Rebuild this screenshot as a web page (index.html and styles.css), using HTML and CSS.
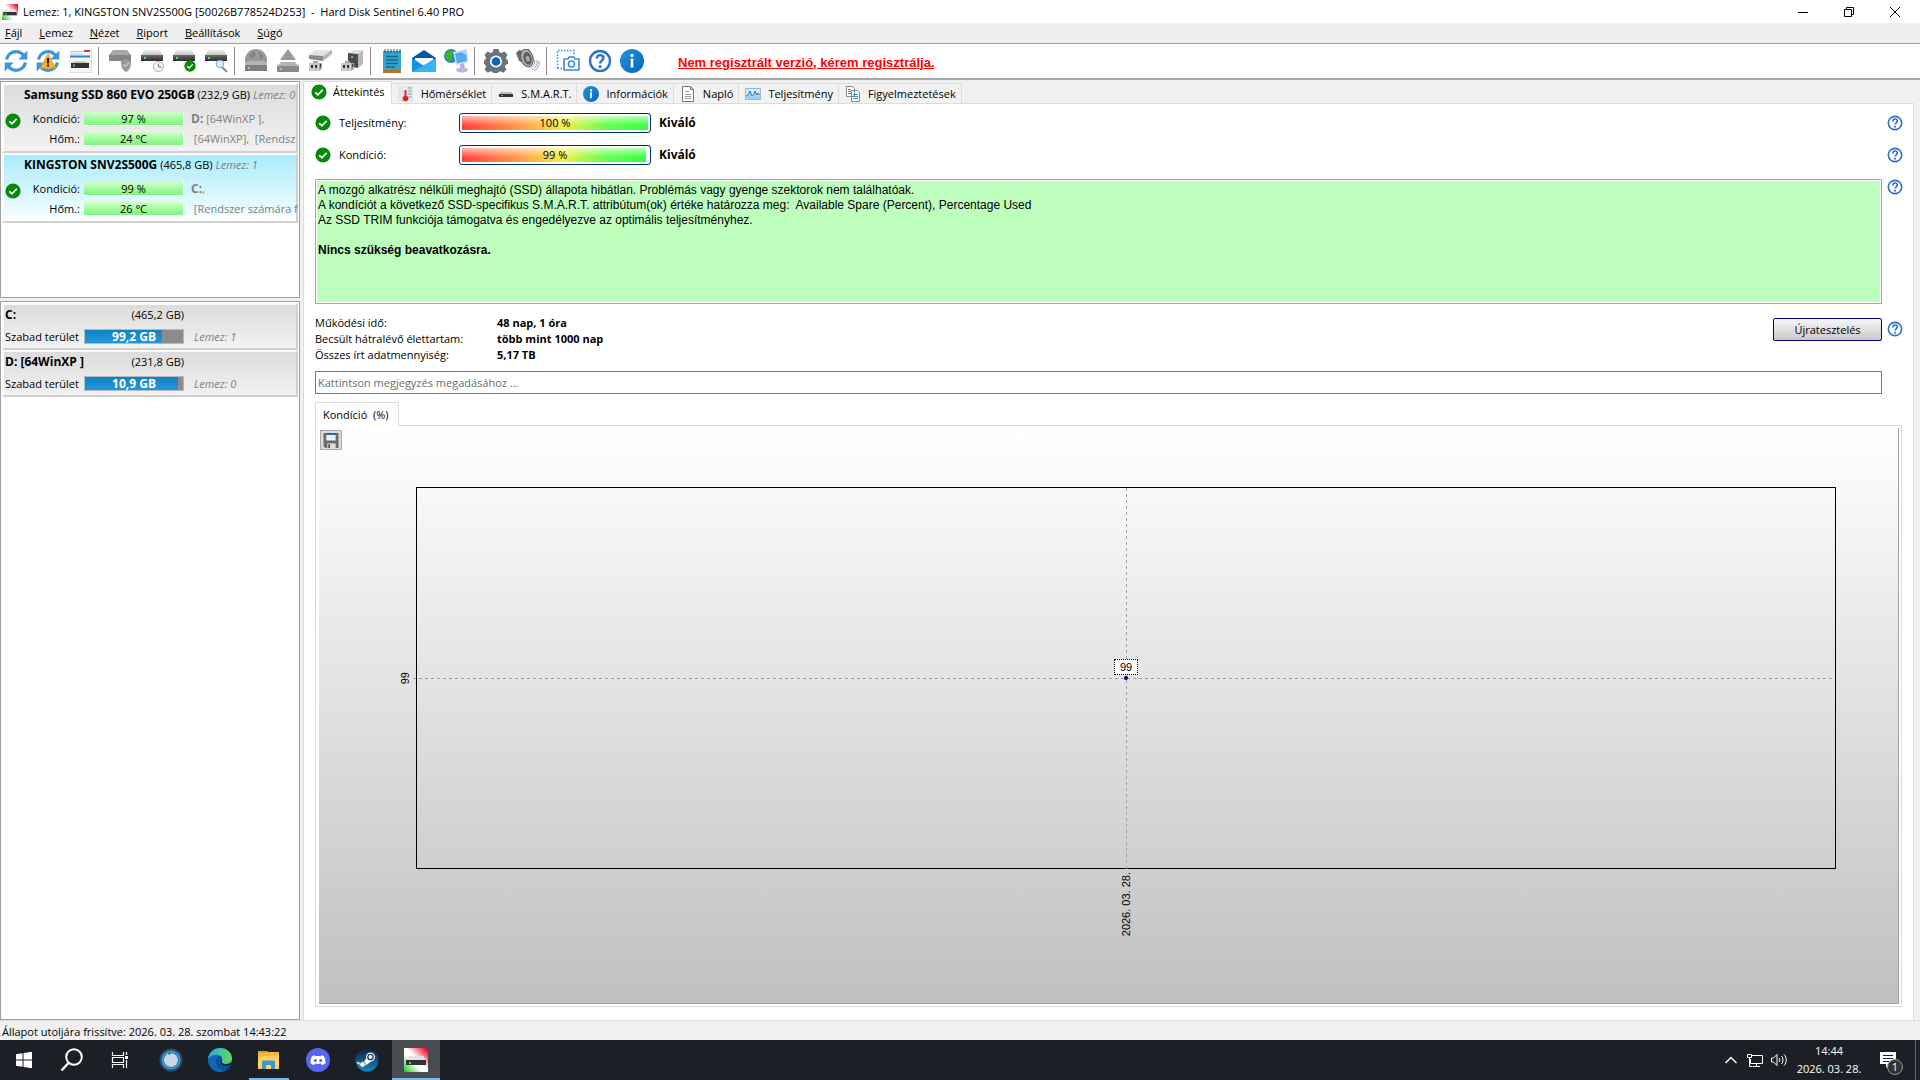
FILE: index.html
```html
<!DOCTYPE html>
<html lang="hu">
<head>
	<meta charset="utf-8">
	<meta name="viewport" content="width=device-width, initial-scale=1">
	<title>Hard Disk Sentinel 6.40 PRO</title>
	<link rel="stylesheet" href="styles.css">
</head>
<body>
	<!-- shared icon shapes -->
	<svg class="defs" aria-hidden="true">
		<defs>
			<linearGradient id="g-metal" x1="0" y1="0" x2="0" y2="1"><stop offset="0" stop-color="#f0f0f0"/><stop offset="1" stop-color="#c2c2c2"/></linearGradient>
			<linearGradient id="g-dark" x1="0" y1="0" x2="0" y2="1"><stop offset="0" stop-color="#6a6a6a"/><stop offset="1" stop-color="#2c2c2c"/></linearGradient>
			<linearGradient id="g-info" x1="0" y1="0" x2="1" y2="1"><stop offset="0" stop-color="#2394df"/><stop offset="1" stop-color="#0a64b8"/></linearGradient>
			<linearGradient id="g-app" x1="1" y1="0" x2="0" y2="1"><stop offset="0.05" stop-color="#f00020"/><stop offset="0.45" stop-color="#fff"/><stop offset="0.6" stop-color="#fff"/><stop offset="1" stop-color="#10c820"/></linearGradient>
			<linearGradient id="g-edge" x1="0" y1="0" x2="1" y2="0"><stop offset="0" stop-color="#2aa6e8"/><stop offset="1" stop-color="#5fdc58"/></linearGradient>
			<linearGradient id="g-steam" x1="0" y1="0" x2="0" y2="1"><stop offset="0" stop-color="#101c44"/><stop offset="1" stop-color="#1488c4"/></linearGradient>
		</defs>
		<symbol id="i-ok" viewBox="0 0 16 16"><circle cx="8" cy="8" r="7.6" fill="#078a07"/><path d="M4.3 8.3l2.6 2.5 4.8-5" fill="none" stroke="#fff" stroke-width="1.8"/></symbol>
		<symbol id="i-help" viewBox="0 0 24 24"><circle cx="12" cy="12" r="10" fill="#f8fbff" stroke="#2f6fc4" stroke-width="2.4"/><path d="M8.8 9.6c0-2.2 1.3-3.5 3.3-3.5s3.3 1.2 3.3 3c0 2.6-3.2 2.6-3.2 5.3" fill="none" stroke="#3070c8" stroke-width="2.4"/><circle cx="12.1" cy="17.5" r="1.5" fill="#3070c8"/></symbol>
		<symbol id="i-info" viewBox="0 0 24 24"><circle cx="12" cy="12" r="12" fill="url(#g-info)"/><path d="M10.7 9.5h2.6v9h-2.6z" fill="#fff"/><circle cx="12" cy="6.4" r="1.7" fill="#fff"/></symbol>
		<symbol id="i-sync" viewBox="0 0 24 24"><path d="M2.5 10.5C3.7 5.600 7.600 2.700 12 2.700c3.100 0 5.700 1.400 7.500 3.700M21.500 13.500c-1.200 4.900-5.100 7.800-9.500 7.800-3.100 0-5.700-1.400-7.500-3.700" fill="none" stroke="#3b94dc" stroke-width="3.200"/><path d="M23.300 1.500v9h-9zM.7 22.500v-9h9z" fill="#3b94dc"/></symbol>
		<symbol id="i-drive" viewBox="0 0 24 24"><path d="M5 2h14l4 5H1z" fill="url(#g-metal)"/><path d="M1 7h22v6H1z" fill="url(#g-dark)"/><path d="M4 9h2v2H4z" fill="#3df03d"/></symbol>
		<symbol id="i-app" viewBox="0 0 24 24"><path d="M0 0h24v24H0z" fill="url(#g-app)"/><path d="M5 8h14l3 4H2z" fill="#e4e4e4"/><path d="M2 12h20v5H2z" fill="#333"/><path d="M5 14h2v2H5z" fill="#2df02d"/></symbol>
		<symbol id="i-plug" viewBox="0 0 24 24"><path d="M1 15h4v-2h5v2h4v6l-3 2H1z" fill="#a5a5a5"/><path d="M1 15h10v8H1z" fill="#c9c9c9"/><path d="M3 17h2v3H3zM7 17h2v3H7zM12 16h1v3h-1z" fill="#333"/></symbol>
	</svg>

	<header class="titlebar">
		<svg class="icon16"><use href="#i-app"/></svg>
		<h1>Lemez: 1, KINGSTON SNV2S500G [50026B778524D253]&nbsp; -&nbsp; Hard Disk Sentinel 6.40 PRO</h1>
		<div class="window-buttons">
			<button type="button" aria-label="Kis méret"><svg viewBox="0 0 12 12"><path d="M1 6.500h10"/></svg></button>
			<button type="button" aria-label="Előző méret"><svg viewBox="0 0 12 12"><path d="M1.500 3.500h7v7h-7zM3.500 3.500v-2h7v7h-2"/></svg></button>
			<button type="button" aria-label="Bezárás"><svg viewBox="0 0 12 12"><path d="M1 1l10 10M11 1L1 11"/></svg></button>
		</div>
	</header>

	<nav class="menubar">
		<a href="#"><u>F</u>ájl</a>
		<a href="#"><u>L</u>emez</a>
		<a href="#"><u>N</u>ézet</a>
		<a href="#"><u>R</u>iport</a>
		<a href="#"><u>B</u>eállítások</a>
		<a href="#"><u>S</u>úgó</a>
	</nav>

	<div class="toolbar">
		<button type="button" aria-label="Frissítés"><svg><use href="#i-sync"/></svg></button>
		<button type="button" aria-label="Újraérzékelés"><svg viewBox="0 0 24 24"><use href="#i-sync"/><path d="M12 5l7.500 14h-15z" fill="#ffb41e" stroke="#f39a10" stroke-linejoin="round"/><path d="M10.900 9h2.200v5.500h-2.200zM10.900 15.500h2.200v2h-2.200z" fill="#222"/></svg></button>
		<button type="button" aria-label="Ablak"><svg viewBox="0 0 24 24"><path d="M1 1h23v23H1z" fill="#ddd"/><path d="M1 1h22v22H1z" fill="#f7f7f7"/><path d="M2 2.500h13M2 5h13" stroke="#b8c8d8"/><path d="M2 7.500h20" stroke="#2f80d8" stroke-width="2"/><path d="M16 2h6" stroke="#d03838" stroke-width="2"/><path d="M6 12h12l3 3H3z" fill="#ccc"/><path d="M3 14h18v5H3z" fill="#333"/><path d="M5 15.500h2v2H5z" fill="#35e035"/></svg></button>
		<span class="sep"></span>
		<button type="button" aria-label="Lemez leállítása"><svg viewBox="0 0 24 24"><path d="M5 1h14l4 5v6H1V6z" fill="#a8a8a8"/><path d="M1 6h22v6H1z" fill="#858585"/><path d="M13 12l5-2 5 2c0 6-1 9-5 11-4-2-5-5-5-11z" fill="#999"/><path d="M15.500 15.500l2 2 3.500-4" stroke="#c6c6c6" fill="none" stroke-width="1.500"/></svg></button>
		<button type="button" aria-label="Rövid teszt"><svg viewBox="0 0 24 24"><use href="#i-drive" y="-1"/><circle cx="18.500" cy="17.500" r="5" fill="#f5f5f5" stroke="#aaa"/><path d="M18.500 14.500v3.500h3" fill="none" stroke="#777"/></svg></button>
		<button type="button" aria-label="Kiterjesztett teszt"><svg viewBox="0 0 24 24"><use href="#i-drive" y="-1"/><use href="#i-ok" x="12" y="11" width="12" height="12"/></svg></button>
		<button type="button" aria-label="Felületteszt"><svg viewBox="0 0 24 24"><use href="#i-drive" y="-1"/><path d="M18 18l5 5" stroke="#888" stroke-width="2"/><circle cx="16" cy="15" r="3.800" fill="#d8eeff" stroke="#7ba5c8"/></svg></button>
		<span class="sep"></span>
		<button type="button" aria-label="Hálózati lemez"><svg viewBox="0 0 24 24"><circle cx="12" cy="11" r="11" fill="#999"/><path d="M5 6l5-4 2 4-4 4zM15 3l5 5-4 3z" fill="#858585"/><path d="M4 12h16l3 4H1z" fill="#b5b5b5"/><path d="M1 16h22v6H1z" fill="#808080"/><path d="M4 18h2v2H4z" fill="#b8b8b8"/></svg></button>
		<button type="button" aria-label="Lemez eltávolítása"><svg viewBox="0 0 24 24"><path d="M12 0l8 11H4z" fill="#999"/><path d="M5 13h14l4 4H1z" fill="#b5b5b5"/><path d="M1 17h22v6H1z" fill="#8a8a8a"/><path d="M4 19h2v2H4z" fill="#b8b8b8"/></svg></button>
		<button type="button" aria-label="Csatlakozás"><svg viewBox="0 0 24 24"><path d="M1 6l6-5h17l-9 6z" fill="#e4e4e4"/><path d="M1 6l14 1v5L1 10z" fill="#8a8a8a"/><path d="M15 7l9-6v4l-9 7z" fill="#b5b5b5"/><use href="#i-plug" y="-1"/></svg></button>
		<button type="button" aria-label="Tápellátás"><svg viewBox="0 0 24 24"><path d="M8 4l6-3h9l-5 4z" fill="#e0e0e0"/><path d="M8 4l10 1v14l-10-2z" fill="#4a4a4a"/><path d="M11 7h2v2h-2z" fill="#35e035"/><path d="M18 5l5-4v14l-5 4z" fill="#b8b8b8"/><use href="#i-plug" y="-1"/></svg></button>
		<span class="sep"></span>
		<button type="button" aria-label="Riport"><svg viewBox="0 0 24 24"><path d="M3 2h18v19H3z" fill="#35a5cc"/><path d="M3 21h18v3H3z" fill="#b56e2c"/><path d="M5 0v4M8 0v4M11 0v4M14 0v4M17 0v4M20 0v4" stroke="#145d7c"/><path d="M6 7.500h12M6 11h12M6 14.500h12M6 18h9" stroke="#146b8c" stroke-width="1.500"/></svg></button>
		<button type="button" aria-label="E-mail"><svg viewBox="0 0 24 24"><path d="M0 9l12-8 12 8v14H0z" fill="#0755a0"/><path d="M3 9h18v8H3z" fill="#f4f8fb"/><path d="M0 9l12 8 12-8v14H0z" fill="#1a91dc"/><path d="M0 23L24 9v14z" fill="#3ab1f0"/></svg></button>
		<button type="button" aria-label="Hálózat"><svg viewBox="0 0 24 24"><circle cx="7" cy="7" r="7" fill="#277dda"/><path d="M1 4l5-3 4 2-3 4 2 3-3 3-4-3z" fill="#38b62a"/><path d="M9 3l14-3 1 13-12 3z" fill="#d2dff2"/><path d="M11 4.500l11-2.500 1 10-10 2.500z" fill="#55a9ef"/><path d="M16 2l6-1 1 6z" fill="#a4d6fa"/><path d="M16 15l4-1 1 6h-5z" fill="#aeb4dd"/><ellipse cx="18" cy="21" rx="6" ry="2.500" fill="#b5b8df"/></svg></button>
		<span class="sep"></span>
		<button type="button" aria-label="Beállítások"><svg viewBox="0 0 24 24"><path d="M9.500 0h5l.8 3.200 2 .9 3-1.600 3.200 3.200-1.600 3 .9 2 1.200.3v4l-2.200.8-.9 2 1.600 2.800-3.200 3.200-3-1.600-2 .9-.8 1.900h-4l-.8-1.900-2-.9-3 1.600L.5 20.600l1.600-2.800-.9-2L0 15v-4l1.200-.3.9-2-1.600-3 3.200-3.200 3 1.600 2-.9z" fill="#68737d"/><circle cx="12" cy="12.500" r="6" fill="#fff"/><circle cx="12" cy="12.500" r="4.300" fill="#0b63bd"/></svg></button>
		<button type="button" aria-label="Hangjelzés"><svg viewBox="0 0 24 24"><path d="M0 4l3-3 5 1 5-2 3 17-8-3-5-2z" fill="#6a6a6a"/><ellipse cx="11" cy="9" rx="6" ry="9" fill="#b0b0b0" stroke="#5c5c5c" transform="rotate(-15 11 9)"/><ellipse cx="11.500" cy="9.500" rx="4" ry="6.500" fill="#606060" transform="rotate(-15 11 9)"/><ellipse cx="11.500" cy="10" rx="2" ry="3" fill="#aaa" transform="rotate(-15 11 9)"/><path d="M18.500 11c1 4-1 6-4 8M21 11c1 5-2 8-5 10M23.300 12c0 5-2 8-5 10" fill="none" stroke="#9696c0"/></svg></button>
		<span class="sep"></span>
		<button type="button" aria-label="Képernyőkép"><svg viewBox="0 0 24 24"><path d="M1.500 19V1.500H18V6M1.500 19.500H6" fill="none" stroke="#3b8bd8" stroke-width="1.500" stroke-dasharray="1.500 1.500"/><path d="M8 10h4l1-2h5l1 2h4v11H8z" fill="#fff" stroke="#3b8bd8" stroke-width="1.600" stroke-linejoin="round"/><circle cx="15.500" cy="15" r="3" fill="none" stroke="#3b8bd8" stroke-width="1.600"/></svg></button>
		<button type="button" aria-label="Súgó"><svg><use href="#i-help"/></svg></button>
		<button type="button" aria-label="Információ"><svg><use href="#i-info"/></svg></button>
		<a class="register" href="#">Nem regisztrált verzió, kérem regisztrálja.</a>
	</div>

	<div class="workspace">
		<aside class="sidebar">
			<section class="list disks">
				<article class="disk">
					<h2><b>Samsung SSD 860 EVO 250GB</b> (232,9 GB) <i>Lemez: 0</i></h2>
					<svg class="icon16"><use href="#i-ok"/></svg>
					<span class="label">Kondíció:</span>
					<span class="bar">97 %</span>
					<span class="parts"><b>D:</b> [64WinXP ],</span>
					<span class="label">Hőm.:</span>
					<span class="bar">24 °C</span>
					<span class="parts">&nbsp;[64WinXP],&nbsp; [Rendsz</span>
				</article>
				<article class="disk selected">
					<h2><b>KINGSTON SNV2S500G</b> (465,8 GB) <i>Lemez: 1</i></h2>
					<svg class="icon16"><use href="#i-ok"/></svg>
					<span class="label">Kondíció:</span>
					<span class="bar">99 %</span>
					<span class="parts"><b>C:</b>,</span>
					<span class="label">Hőm.:</span>
					<span class="bar">26 °C</span>
					<span class="parts">&nbsp;[Rendszer számára f</span>
				</article>
			</section>
			<section class="list volumes">
				<article class="volume">
					<b>C:</b><span class="size">(465,2 GB)</span>
					<span class="row">Szabad terület</span>
					<span class="space"><span class="used" style="width: 79%"></span><span class="free">99,2 GB</span></span>
					<i>Lemez: 1</i>
				</article>
				<article class="volume">
					<b>D: [64WinXP ]</b><span class="size">(231,8 GB)</span>
					<span class="row">Szabad terület</span>
					<span class="space"><span class="used" style="width: 95%"></span><span class="free">10,9 GB</span></span>
					<i>Lemez: 0</i>
				</article>
			</section>
		</aside>

		<main class="content">
			<div class="tabs" role="tablist">
				<button type="button" role="tab" class="active" aria-selected="true"><svg><use href="#i-ok"/></svg>Áttekintés</button>
				<button type="button" role="tab"><svg viewBox="0 0 16 16"><path d="M0 0h15v16H0z" fill="#dfe7ee"/><path d="M10 2h4M10 5h4M10 8h4M10 11h4" stroke="#8a9aa8"/><path d="M6 1h3v14H6z" fill="#f2f2f2"/><path d="M6.500 4h2v7h-2z" fill="#d22"/><circle cx="7.500" cy="12.500" r="2.800" fill="#d22"/></svg>Hőmérséklet</button>
				<button type="button" role="tab"><svg viewBox="0 0 16 16"><path d="M3 6h10l2 2H1z" fill="#bbb"/><path d="M1 8h14v3H1z" fill="#333"/><path d="M3 9h2v1H3z" fill="#3d3"/></svg>S.M.A.R.T.</button>
				<button type="button" role="tab"><svg><use href="#i-info"/></svg>Információk</button>
				<button type="button" role="tab"><svg viewBox="0 0 16 16"><path d="M2.500.5h8l3 3v12h-11zM10.500.5v3h3" fill="#fff" stroke="#777"/><path d="M5 5.500h4M5 8.500h6M5 10.500h6M5 12.500h6" stroke="#999"/></svg>Napló</button>
				<button type="button" role="tab"><svg viewBox="0 0 16 16"><path d="M.5 2.500h15v11H.5z" fill="#d8ecfa" stroke="#9cb8cc"/><path d="M1 12l2-3 2-4 2 5 2-2 1-3 2 4 1-2 2 4v2H1z" fill="#9ed0f2"/><path d="M1 10l2-1 2-4 2 5 2-2 1-3 2 4 1-2 2 2" fill="none" stroke="#1c86cc"/></svg>Teljesítmény</button>
				<button type="button" role="tab"><svg viewBox="0 0 16 16"><path d="M1.500.5h6l2 2v8h-8zM6.500 4.500h6l2 2v9h-8z" fill="#fff" stroke="#888"/><path d="M3 3.500h3M3 5.500h3M3 7.500h3M8 8.500h5M8 10.500h5M8 12.500h5" stroke="#3b8bd8"/></svg>Figyelmeztetések</button>
			</div>

			<div class="overview">
				<div class="gauge-row">
					<svg class="icon16"><use href="#i-ok"/></svg>
					<span>Teljesítmény:</span>
					<span class="gauge"><span class="fill" style="width: 100%"></span><span class="value">100 %</span></span>
					<b>Kiváló</b>
					<button type="button" class="help" aria-label="Súgó"><svg><use href="#i-help"/></svg></button>
				</div>
				<div class="gauge-row">
					<svg class="icon16"><use href="#i-ok"/></svg>
					<span>Kondíció:</span>
					<span class="gauge"><span class="fill" style="width: 99%"></span><span class="value">99 %</span></span>
					<b>Kiváló</b>
					<button type="button" class="help" aria-label="Súgó"><svg><use href="#i-help"/></svg></button>
				</div>

				<div class="help-row">
					<div class="status-text">
						<p>A mozgó alkatrész nélküli meghajtó (SSD) állapota hibátlan. Problémás vagy gyenge szektorok nem találhatóak.</p>
						<p>A kondíciót a következő SSD-specifikus S.M.A.R.T. attribútum(ok) értéke határozza meg:&nbsp; Available Spare (Percent), Percentage Used</p>
						<p>Az SSD TRIM funkciója támogatva és engedélyezve az optimális teljesítményhez.</p>
						<p class="verdict">Nincs szükség beavatkozásra.</p>
					</div>
					<button type="button" class="help" aria-label="Súgó"><svg><use href="#i-help"/></svg></button>
				</div>

				<div class="help-row stats-row">
					<dl class="stats">
						<dt>Működési idő:</dt><dd>48 nap, 1 óra</dd>
						<dt>Becsült hátralévő élettartam:</dt><dd>több mint 1000 nap</dd>
						<dt>Összes írt adatmennyiség:</dt><dd>5,17 TB</dd>
					</dl>
					<button type="button" class="retest">Újratesztelés</button>
					<button type="button" class="help" aria-label="Súgó"><svg><use href="#i-help"/></svg></button>
				</div>

				<input class="comment" type="text" aria-label="Megjegyzés" placeholder="Kattintson megjegyzés megadásához ...">

				<button type="button" class="chart-tab">Kondíció&nbsp; (%)</button>
				<div class="chart-frame">
					<div class="chart">
						<button type="button" class="save" aria-label="Mentés"><svg viewBox="0 0 16 16"><path d="M0 0h16v16H2l-2-2z" fill="#6a6a6a"/><path d="M3 0h10v2H3z" fill="#0b63bd"/><path d="M3 2h10v6H3z" fill="#eee"/><path d="M4 11h9v5H4z" fill="#ddd"/><path d="M5 12h2v4H5z" fill="#555"/></svg></button>
						<div class="plot">
							<span class="line-h"></span>
							<span class="line-v"></span>
							<span class="axis-y">99</span>
							<span class="axis-x">2026. 03. 28.</span>
							<span class="point"></span>
							<span class="point-label">99</span>
						</div>
					</div>
				</div>
			</div>
		</main>
	</div>

	<footer class="statusbar">Állapot utoljára frissítve: 2026. 03. 28. szombat 14:43:22</footer>

	<div class="taskbar">
		<button type="button" aria-label="Start"><svg viewBox="0 0 24 24"><path d="M4 6.200l6.500-1v6.300H4zM11.500 5l8.500-1.200v7.700h-8.500zM4 12.500h6.500v6.300L4 17.800zM11.500 12.500H20v7.700L11.500 19z" fill="#fff"/></svg></button>
		<button type="button" aria-label="Keresés"><svg viewBox="0 0 24 24"><circle cx="14" cy="9" r="7.800" fill="none" stroke="#fff" stroke-width="2"/><path d="M8.500 15L1.500 22.500" stroke="#fff" stroke-width="2.500"/></svg></button>
		<button type="button" aria-label="Feladatnézet" class="taskview"><svg viewBox="0 0 24 24"><path d="M4.500 4v3.500h11V4M4.500 20v-3.500h11V20M4.500 9.500h11v5h-11zM18.500 4v3M18.500 12v8" fill="none" stroke="#fff" stroke-width="1.200"/><path d="M17 8h3v3h-3z" fill="#fff"/></svg></button>
		<button type="button" aria-label="Vízóra"><svg viewBox="0 0 24 24"><circle cx="12" cy="12" r="11.500" fill="#2c4878"/><circle cx="12" cy="12" r="8.500" fill="none" stroke="#2fa0c8" stroke-width="2"/><path d="M12 5a7 7 0 1 1-5 2l2-2 1 2z" fill="#ccd5e4"/></svg></button>
		<button type="button" aria-label="Edge"><svg viewBox="0 0 24 24"><circle cx="12" cy="12" r="12" fill="#0e67b8"/><path d="M0 11C1 4 6 0 12 0c7 0 12 5 12 10 0 4-3 6-6 6-3 0-5-1-4-3 1-1 1-6-5-6C5 6.500 2 8 0 11z" fill="url(#g-edge)"/><path d="M11 8c-5 3-4 12 4 14 3 .5 6-1 8-5-4 3-9 2-10-1-.5-2 .5-3 .5-5 0-1.500-1-3-2.500-3z" fill="#0b4f98"/><path d="M13 12c-1 4 1 6 6 6 2 0 3-.5 4.500-2L24 14c-1 1-3 2-6 2-3 0-5-1-4-3z" fill="#1c1f26"/></svg></button>
		<button type="button" aria-label="Fájlkezelő" class="open"><svg viewBox="0 0 24 24"><path d="M1 3h9l2 2v4H1z" fill="#dc9e18"/><path d="M1 6h21v15H1z" fill="#ffd35c"/><path d="M1 9V5h7l2-1h12v3z" fill="#f3b93c"/><path d="M5 21v-7c0-1 .5-1.500 1.500-1.500h10c1 0 1.500.5 1.500 1.500v7h-4v-4H9v4z" fill="#3b98d8"/></svg></button>
		<button type="button" aria-label="Discord"><svg viewBox="0 0 24 24"><circle cx="12" cy="12" r="12" fill="#5865f2"/><path d="M8.500 7.200C7 7.500 6.200 8 6.200 8c-1.200 2-1.800 4.500-1.700 7.300 1.200 1 2.500 1.500 3.700 1.700l.9-1.500c2 .6 3.800.6 5.800 0l.9 1.500c1.200-.2 2.500-.7 3.700-1.700.1-2.800-.5-5.300-1.700-7.300 0 0-.8-.5-2.300-.8l-.6 1c-2-.3-3.800-.3-5.800 0z" fill="#fff"/><circle cx="9.300" cy="12.500" r="1.500" fill="#5865f2"/><circle cx="14.700" cy="12.500" r="1.500" fill="#5865f2"/></svg></button>
		<button type="button" aria-label="Steam"><svg viewBox="0 0 24 24"><circle cx="12" cy="12" r="11.500" fill="url(#g-steam)"/><path d="M1 14l6.500 1 4.500-5 4 3.500-6 4.500-3 1.500z" fill="#fff"/><circle cx="15.500" cy="9" r="4.500" fill="#fff"/><circle cx="15.500" cy="9" r="2.700" fill="#fff" stroke="#18325c" stroke-width="1.300"/><circle cx="7.500" cy="16.500" r="2.800" fill="#fff" stroke="#18628c" stroke-width=".8"/></svg></button>
		<button type="button" aria-label="Hard Disk Sentinel" class="current"><svg><use href="#i-app"/></svg></button>
		<div class="tray">
			<button type="button" aria-label="Rejtett ikonok"><svg viewBox="0 0 16 16"><path d="M2.500 11L8 5.500l5.500 5.500" fill="none" stroke="#fff" stroke-width="1.400"/></svg></button>
			<button type="button" aria-label="Hálózat"><svg viewBox="0 0 16 16"><path d="M5 3.500h10.500v8H3.500V7M9.500 12v2.500M6 14.500h7M.5 2.500h4v3h-4zM2.500 6v8.500h3" fill="none" stroke="#fff"/></svg></button>
			<button type="button" aria-label="Hangerő"><svg viewBox="0 0 16 16"><path d="M.5 6h2L6 2.500v11L2.500 10h-2zM8 6c1 1 1 3 0 4M10.500 4c2 2 2 6 0 8M13 2.500c3 3 3 8 0 11" fill="none" stroke="#fff"/></svg></button>
			<time class="clock" datetime="2026-03-28T14:44">14:44<br>2026. 03. 28.</time>
			<button type="button" class="notify" aria-label="Értesítések"><svg viewBox="0 0 16 16"><path d="M0 0h16v12H9l-3 4v-4H0z" fill="#fff"/><path d="M3 3.500h10M3 6.500h10M3 9.500h6" stroke="#1c1f26"/></svg><span class="badge">1</span></button>
			<span class="show-desktop"></span>
		</div>
	</div>
</body>
</html>
```

FILE: styles.css
```css
* {
	box-sizing: border-box;
}

body {
	margin: 0;
	height: 100vh;
	display: flex;
	flex-direction: column;
	overflow: hidden;
	font: 11px/16px 'Open Sans', 'Noto Sans', sans-serif;
	color: #000;
	background: #f0f0f0;
}

button {
	font: inherit;
	color: inherit;
	margin: 0;
	padding: 0;
	border: 0;
	background: none;
}

h1, h2, p, dl, dd {
	margin: 0;
	font-size: inherit;
	font-weight: normal;
}

b {
	font-size: 12px;
}

svg {
	display: block;
	flex: none;
}

.defs {
	position: absolute;
	width: 0;
	height: 0;
}

.icon16 {
	width: 16px;
	height: 16px;
}

/* Title and menu */

.titlebar {
	display: flex;
	align-items: center;
	gap: 5px;
	height: 23px;
	padding-left: 2px;
	background: #fff;
}

.window-buttons {
	display: flex;
	margin-left: auto;
	padding-right: 2px;
}

.window-buttons button {
	width: 46px;
	height: 20px;
	display: flex;
	justify-content: center;
	align-items: center;
}

.window-buttons svg {
	width: 12px;
	height: 12px;
	fill: none;
	stroke: #000;
}

.menubar {
	display: flex;
	align-items: center;
	gap: 17px;
	height: 20px;
	padding-left: 5px;
	background: #efefef;
}

.menubar a {
	color: #000;
	text-decoration: none;
}

/* Toolbar */

.toolbar {
	display: flex;
	align-items: center;
	height: 37px;
	border-top: 1px solid #a0a0a0;
	border-bottom: 2px solid #a8a8a8;
	background: #fff;
}

.toolbar button {
	width: 32px;
	height: 32px;
	padding: 4px;
}

.toolbar svg {
	width: 24px;
	height: 24px;
}

.sep {
	width: 8px;
	height: 28px;
	border-left: 2px solid #fff;
	background: linear-gradient(to right, #888 1px, transparent 1px);
}

.register {
	margin-left: 30px;
	padding-top: 4px;
	font: bold 13px/16px 'Liberation Sans', Arial, sans-serif;
	color: #f00;
}

/* Left side */

.workspace {
	flex: 1;
	display: flex;
	min-height: 0;
	padding-top: 1px;
	border-bottom: 1px solid #dcdcdc;
}

.sidebar {
	width: 303px;
	padding-right: 3px;
	flex: none;
	display: flex;
	flex-direction: column;
	gap: 3px;
}

.list {
	border: 1px solid #a0a0a0;
	background: #fff;
	padding: 1px;
}

.disks {
	height: 217px;
}

.volumes {
	flex: 1;
}

.disk, .volume {
	border-style: solid;
	border-width: 2px;
	border-color: #fafafa #d0d0d0 #d0d0d0 #fafafa;
	background: linear-gradient(#dcdcdc, #f2f2f2);
	white-space: nowrap;
}

.disk {
	display: grid;
	grid-template-columns: 16px 55px 100px 1fr;
	grid-template-rows: 24px 20px 20px;
	column-gap: 4px;
	align-items: center;
	height: 70px;
	padding-left: 1px;
}

.disk.selected {
	background: linear-gradient(#aaecfc, #e8fbff 80%, #fff);
}

.disk h2 {
	grid-column: 1 / -1;
	align-self: start;
	padding: 2px 0 0 19px;
}

.disk .icon16 {
	grid-column: 1;
	grid-row: 2;
	align-self: end;
}

.disk .label {
	grid-column: 2;
	text-align: right;
}

.disk .bar {
	height: 14px;
	line-height: 14px;
	text-align: center;
	background: linear-gradient(#d0ffc8, #7cf67c);
	border-right: 1px solid #fff;
	border-bottom: 1px solid #fff;
}

.disk .parts {
	padding-left: 3px;
	color: #808080;
}

.list i {
	color: #808080;
}

.volume {
	display: grid;
	grid-template-columns: 75px 100px 1fr;
	grid-template-rows: 20px 23px;
	column-gap: 4px;
	align-items: center;
	height: 47px;
	padding-left: 1px;
}

.volume .size {
	text-align: right;
}

.volume .row {
	grid-column: 1;
}

.volume i {
	padding-left: 6px;
}

.space {
	display: grid;
	height: 15px;
	border: 1px solid #b8b8b8;
	background: #8c8c8c;
}

.space > span {
	grid-area: 1 / 1;
}

.space .used {
	background: linear-gradient(#0f84c4, #2298da);
}

.space .free {
	font-size: 12px;
	font-weight: bold;
	line-height: 13px;
	text-align: center;
	color: #fff;
}

/* Main tabs */

.content {
	flex: 1;
	min-width: 0;
	display: flex;
	flex-direction: column;
	padding-right: 6px;
}

.tabs {
	display: flex;
	align-items: flex-end;
	position: relative;
	z-index: 1;
	margin-bottom: -1px;
}

.tabs button {
	display: flex;
	align-items: center;
	gap: 7px;
	height: 21px;
	padding: 0 5px 0 6px;
	border: solid #dcdcdc;
	border-width: 1px 1px 1px 0;
	background: #f2f2f2;
}

.tabs .active {
	gap: 6px;
	height: 23px;
	padding: 0 6px 3px 7px;
	border-width: 1px 1px 0 1px;
	background: #fff;
}

.tabs svg {
	width: 16px;
	height: 16px;
}

.overview {
	flex: 1;
	min-height: 0;
	display: flex;
	flex-direction: column;
	border: 1px solid #dcdcdc;
	border-bottom: 0;
	padding: 3px 10px 13px 11px;
	background: #fff;
}

.gauge-row {
	display: grid;
	grid-template-columns: 16px 112px 192px 1fr 16px;
	column-gap: 8px;
	align-items: center;
	height: 32px;
}

.gauge {
	display: grid;
	height: 20px;
	padding: 2px;
	border: 1px solid #003070;
	border-radius: 3px;
}

.gauge > span {
	grid-area: 1 / 1;
}

.gauge .fill {
	background: linear-gradient(rgba(255, 255, 255, 0.65), rgba(255, 255, 255, 0.1) 70%), linear-gradient(to right, #ff2828, #ff9632 33%, #f0f028 55%, #50ff3c 78%, #1eff28);
}

.gauge .value {
	line-height: 14px;
	text-align: center;
}

.help svg {
	width: 16px;
	height: 16px;
}

.help-row {
	display: flex;
	align-items: flex-start;
	gap: 5px;
	margin-top: 8px;
}

.status-text {
	flex: 1;
	min-height: 125px;
	padding: 3px 2px;
	border: 1px solid #a8a8a8;
	outline: 1px solid #fff;
	outline-offset: -2px;
	font: 12px/15px 'Liberation Sans', Arial, sans-serif;
	background: #beffbe;
}

.verdict {
	margin-top: 15px;
	font-weight: bold;
}

.stats-row {
	margin-top: 11px;
}

.stats {
	flex: 1;
	display: grid;
	grid-template-columns: 182px 1fr;
}

.stats dd {
	font-weight: bold;
}

.retest {
	width: 109px;
	height: 23px;
	margin-top: 3px;
	border: 1px solid #000080;
	border-radius: 2px;
	background: linear-gradient(#f8f8f8, #c8c8c8);
}

.stats-row .help {
	margin-top: 6px;
}

.comment {
	height: 23px;
	margin: 8px 21px 8px 0;
	padding: 0 2px;
	border: 1px solid #7a7a7a;
	font: inherit;
}

.comment::placeholder {
	color: #6d6d6d;
}

/* Chart */

.chart-tab {
	align-self: flex-start;
	height: 24px;
	margin-bottom: -1px;
	padding: 0 9px 0 7px;
	border: 1px solid #dcdcdc;
	border-bottom: 0;
	background: #fff;
	z-index: 1;
}

.chart-frame {
	flex: 1;
	display: flex;
	margin-right: 1px;
	padding: 2px 2px 2px 3px;
	border: 1px solid #dcdcdc;
	background: #fff;
}

.chart {
	flex: 1;
	display: flex;
	flex-direction: column;
	padding: 2px 62px 134px 1px;
	border: solid #a0a0a0;
	border-width: 0 1px 1px 0;
	background: linear-gradient(#fff, #c0c0c0);
}

.save {
	align-self: flex-start;
	width: 22px;
	height: 20px;
	padding: 2px;
	border: 1px solid #a8a8a8;
	background: #ddd;
}

.save svg {
	width: 16px;
	height: 15px;
}

.plot {
	position: relative;
	flex: 1;
	margin: 37px 0 0 96px;
	border: 1px solid #000;
}

.line-h, .line-v, .axis-x, .axis-y, .point, .point-label {
	position: absolute;
}

.line-h {
	top: 50%;
	left: -4px;
	right: 0;
	height: 1px;
	background: repeating-linear-gradient(to right, #a0a0a0 0 3px, transparent 3px 6px);
}

.line-v {
	left: 50%;
	top: 0;
	bottom: -4px;
	width: 1px;
	background: repeating-linear-gradient(#a0a0a0 0 3px, transparent 3px 6px);
}

.axis-x, .axis-y {
	font: 11px/12px 'Liberation Sans', Arial, sans-serif;
	white-space: nowrap;
	writing-mode: vertical-rl;
	transform: rotate(180deg);
}

.axis-y {
	top: calc(50% - 6px);
	left: -18px;
}

.axis-x {
	top: calc(100% + 4px);
	left: calc(50% - 6px);
}

.point {
	top: calc(50% - 2px);
	left: calc(50% - 2px);
	width: 4px;
	height: 4px;
	border-radius: 2px;
	background: #000080;
}

.point-label {
	left: calc(50% - 12px);
	top: calc(50% - 19px);
	width: 24px;
	border: 1px dotted #000;
	font: 11px/14px 'Liberation Sans', Arial, sans-serif;
	text-align: center;
	background: #fff;
}

.statusbar {
	height: 19px;
	padding-left: 2px;
	line-height: 22px;
	background: #f0f0f0;
}

/* Taskbar */

.taskbar {
	display: flex;
	height: 40px;
	color: #fff;
	background: #1c1f26;
}

.taskbar button {
	width: 48px;
	display: flex;
	justify-content: center;
	align-items: center;
}

.taskbar .taskview {
	margin-right: 2px;
}

.taskview ~ button {
	margin-left: 1px;
}

.taskbar svg {
	width: 24px;
	height: 24px;
}

.taskbar .open {
	background: linear-gradient(#76b9ed, #76b9ed) center bottom / 40px 2px no-repeat;
}

.taskbar .current {
	border-bottom: 2px solid #76b9ed;
	padding-top: 2px;
	background: #4a4c52;
}

.tray {
	display: flex;
	align-items: center;
	margin-left: auto;
}

.tray button {
	width: 24px;
	height: 40px;
}

.tray .clock {
	width: 76px;
	line-height: 18px;
	text-align: center;
}

.taskbar .tray svg {
	width: 16px;
	height: 16px;
}

.tray .notify {
	position: relative;
	width: 42px;
}

.badge {
	position: absolute;
	left: 20px;
	top: 19px;
	width: 16px;
	height: 16px;
	border: 1px solid #999;
	border-radius: 8px;
	line-height: 14px;
	background: #333;
}

.show-desktop {
	width: 5px;
	height: 40px;
	margin-left: 6px;
	border-left: 1px solid #666;
}
```
